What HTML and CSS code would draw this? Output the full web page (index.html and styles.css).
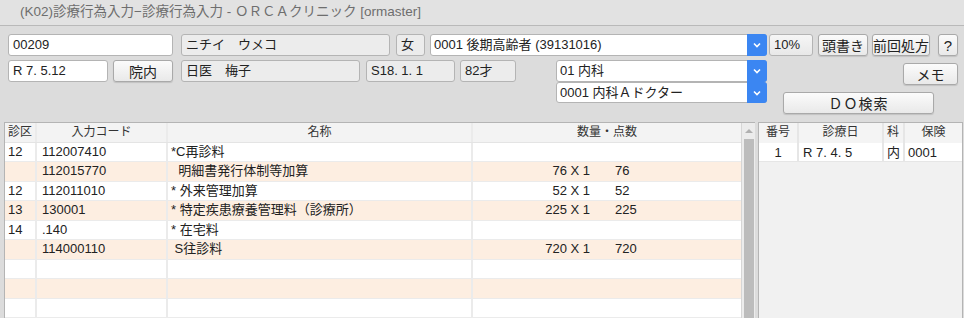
FILE: index.html
```html
<!DOCTYPE html>
<html lang="ja">

<head>
    <meta charset="UTF-8">
    <title>診療行為入力</title>
    <link rel="stylesheet" href="styles.css">
</head>

<body>
    <div class="titlebar">(K02)診療行為入力−診療行為入力 - ＯＲＣＡクリニック [ormaster]</div>

    <div class="top">
        <div class="row1">
            <div class="field w-id">00209</div>
            <div class="field ro w-kana">ニチイ　ウメコ</div>
            <div class="field ro w-sex">女</div>
            <div class="combo w-ins">
                <span class="combo-text">0001 後期高齢者 (39131016)</span>
                <span class="combo-btn"><svg width="8" height="6" viewBox="0 0 8 6"><polyline points="1,1.5 4,4.5 7,1.5" fill="none" stroke="#fff" stroke-width="1.6"/></svg></span>
            </div>
            <div class="field ro w-rate">10%</div>
            <button class="btn w-head">頭書き</button>
            <button class="btn w-prev">前回処方</button>
            <button class="btn w-help">?</button>
        </div>

        <div class="row2">
            <div class="field w-date">R 7. 5.12</div>
            <button class="btn w-inner">院内</button>
            <div class="field ro w-name">日医　梅子</div>
            <div class="field ro w-birth">S18. 1. 1</div>
            <div class="field ro w-age">82才</div>

            <div class="combo-col">
                <div class="combo">
                    <span class="combo-text">01 内科</span>
                    <span class="combo-btn"><svg width="8" height="6" viewBox="0 0 8 6"><polyline points="1,1.5 4,4.5 7,1.5" fill="none" stroke="#fff" stroke-width="1.6"/></svg></span>
                </div>
                <div class="combo">
                    <span class="combo-text">0001 内科Ａドクター</span>
                    <span class="combo-btn"><svg width="8" height="6" viewBox="0 0 8 6"><polyline points="1,1.5 4,4.5 7,1.5" fill="none" stroke="#fff" stroke-width="1.6"/></svg></span>
                </div>
            </div>

            <div class="btn-col">
                <button class="btn w-memo">メモ</button>
                <button class="btn w-do">ＤＯ検索</button>
            </div>
        </div>
    </div>

    <div class="main">
        <div class="order-table">
            <div class="order-body">
                <div class="trow thead">
                    <div class="c-kubun left">診区</div>
                    <div class="c-code center">入力コード</div>
                    <div class="c-name center">名称</div>
                    <div class="c-num center">数量・点数</div>
                </div>
                <div class="trow">
                    <div class="c-kubun">12</div>
                    <div class="c-code">112007410</div>
                    <div class="c-name">*C再診料</div>
                    <div class="c-num"></div>
                </div>
                <div class="trow alt">
                    <div class="c-kubun"></div>
                    <div class="c-code">112015770</div>
                    <div class="c-name">&nbsp;&nbsp;明細書発行体制等加算</div>
                    <div class="c-num"><span class="qty">76 X 1</span><span class="pts">76</span></div>
                </div>
                <div class="trow">
                    <div class="c-kubun">12</div>
                    <div class="c-code">112011010</div>
                    <div class="c-name">* 外来管理加算</div>
                    <div class="c-num"><span class="qty">52 X 1</span><span class="pts">52</span></div>
                </div>
                <div class="trow alt">
                    <div class="c-kubun">13</div>
                    <div class="c-code">130001</div>
                    <div class="c-name">* 特定疾患療養管理料（診療所）</div>
                    <div class="c-num"><span class="qty">225 X 1</span><span class="pts">225</span></div>
                </div>
                <div class="trow">
                    <div class="c-kubun">14</div>
                    <div class="c-code">.140</div>
                    <div class="c-name">* 在宅料</div>
                    <div class="c-num"></div>
                </div>
                <div class="trow alt">
                    <div class="c-kubun"></div>
                    <div class="c-code">114000110</div>
                    <div class="c-name">&nbsp;S往診料</div>
                    <div class="c-num"><span class="qty">720 X 1</span><span class="pts">720</span></div>
                </div>
                <div class="trow">
                    <div class="c-kubun"></div><div class="c-code"></div><div class="c-name"></div><div class="c-num"></div>
                </div>
                <div class="trow alt">
                    <div class="c-kubun"></div><div class="c-code"></div><div class="c-name"></div><div class="c-num"></div>
                </div>
                <div class="trow">
                    <div class="c-kubun"></div><div class="c-code"></div><div class="c-name"></div><div class="c-num"></div>
                </div>
            </div>
            <div class="scrollbar">
                <div class="scroll-up"></div>
                <div class="scroll-thumb"></div>
            </div>
        </div>

        <div class="history">
            <div class="hrow hhead">
                <div class="h-no">番号</div>
                <div class="h-date center">診療日</div>
                <div class="h-ka">科</div>
                <div class="h-ins center">保険</div>
            </div>
            <div class="hrow hdata">
                <div class="h-no">1</div>
                <div class="h-date">R 7. 4. 5</div>
                <div class="h-ka">内</div>
                <div class="h-ins">0001</div>
            </div>
        </div>
    </div>
</body>

</html>
```

FILE: styles.css
```css
body {
    margin: 0;
    background-color: #dcdcdc;
    color: #222222;
    font-family: "Liberation Sans", "Noto Sans CJK JP", sans-serif;
    font-size: 13px;
    height: 318px;
    overflow: hidden;
}

.titlebar {
    height: 25px;
    line-height: 24px;
    padding-left: 20px;
    font-size: 13.5px;
    color: #6e6e6e;
    background-color: #e2e2e2;
    border-bottom: 1px solid #b9b9b9;
}

.top {
    padding: 0 6px 0 8px;
}

.row1 {
    display: flex;
    margin-top: 8px;
    height: 22px;
}

.row2 {
    display: flex;
    align-items: flex-start;
    margin-top: 4px;
}

.field {
    box-sizing: border-box;
    height: 22px;
    line-height: 20px;
    padding: 0 4px;
    background-color: #ffffff;
    border: 1px solid #b4b4b4;
    border-radius: 3px;
    white-space: nowrap;
}

.field.ro {
    background-color: #ececec;
}

.btn {
    box-sizing: border-box;
    height: 22px;
    padding: 0;
    font-family: inherit;
    font-size: 14px;
    color: #222222;
    background: linear-gradient(#fbfbfb, #e9e9e9);
    border: 1px solid #a9a9a9;
    border-radius: 3px;
    box-shadow: 0 1px 1px rgba(0, 0, 0, 0.12);
    white-space: nowrap;
}

.w-id { width: 165px; }
.w-kana { width: 209px; margin-left: 8px; }
.w-sex { width: 29px; margin-left: 6px; }
.w-ins { width: 337px; margin-left: 5px; }
.w-rate { width: 44px; margin-left: 2px; background: linear-gradient(#f6f6f6, #e8e8e8) !important; }
.w-head { width: 50px; margin-left: 5px; }
.w-prev { width: 58px; margin-left: 4px; }
.w-help { width: 20px; margin-left: 8px; font-size: 15px; }

.w-date { width: 100px; }
.w-inner { width: 60px; margin-left: 5px; }
.w-name { width: 179px; margin-left: 8px; }
.w-birth { width: 89px; margin-left: 6px; }
.w-age { width: 56px; margin-left: 5px; }

.combo {
    box-sizing: border-box;
    display: flex;
    height: 22px;
    background-color: #ffffff;
    border: 1px solid #b4b4b4;
    border-radius: 3px;
}

.combo-text {
    flex: 1;
    line-height: 20px;
    padding-left: 3px;
    white-space: nowrap;
}

.combo-btn {
    width: 20px;
    margin: -1px -1px -1px 0;
    display: flex;
    align-items: center;
    justify-content: center;
    background-color: #3b86f2;
    border-radius: 0 3px 3px 0;
}

.combo-col {
    width: 211px;
    margin-left: 40px;
}

.combo-col .combo + .combo {
    height: 21px;
}

.btn-col {
    width: 175px;
    margin-left: 16px;
    display: flex;
    flex-direction: column;
    align-items: flex-end;
}

.w-memo {
    width: 55px;
    margin-top: 3px;
}

.w-do {
    width: 151px;
    margin-top: 7px;
    align-self: flex-start;
    letter-spacing: 1px;
}

.main {
    display: flex;
    margin-top: 8px;
    padding-left: 4px;
}

.order-table {
    display: flex;
    width: 751px;
    height: 200px;
    box-sizing: border-box;
    background-color: #ffffff;
    border: 1px solid #b4b4b4;
    border-right: none;
}

.order-body {
    flex: 1;
}

.trow {
    display: flex;
    height: 19.5px;
    box-sizing: border-box;
    border-bottom: 1px solid #ebebeb;
    line-height: 18px;
    white-space: nowrap;
}

.trow.alt {
    background-color: #fdeee1;
}

.trow.thead {
    background-color: #f3f3f3;
    border-bottom: 1px solid #e4e4e4;
    font-size: 12px;
    color: #333333;
}

.trow > div {
    box-sizing: border-box;
    border-right: 2px solid #ebebeb;
    padding-left: 3px;
}

.c-kubun { width: 32px; }
.c-code { width: 131px; padding-left: 5px !important; }
.c-name { width: 305px; }
.c-num { flex: 1; border-right: none !important; display: flex; }

.center { text-align: center; justify-content: center; padding-left: 0 !important; }
.left { padding-left: 3px; }

.qty {
    width: 114px;
    text-align: right;
}

.pts {
    margin-left: 25px;
}

.scrollbar {
    width: 13px;
    background-color: #ececec;
    border-left: 1px solid #d6d6d6;
    display: flex;
    flex-direction: column;
    align-items: center;
}

.scroll-up {
    margin-top: 6px;
    width: 0;
    height: 0;
    border-left: 4px solid transparent;
    border-right: 4px solid transparent;
    border-bottom: 4px solid #b0b0b0;
}

.scroll-thumb {
    margin-top: 6px;
    width: 10px;
    flex: 1;
    background-color: #bcbcbc;
}

.history {
    width: 205px;
    height: 200px;
    margin-left: 3px;
    box-sizing: border-box;
    background-color: #f1f1f1;
    border: 1px solid #b4b4b4;
}

.hrow {
    display: flex;
    height: 19.5px;
    line-height: 19px;
    box-sizing: border-box;
    white-space: nowrap;
}

.hhead {
    background-color: #f4f4f4;
    font-size: 12px;
    color: #333333;
}

.hdata {
    background-color: #ffffff;
    border-bottom: 1px solid #e6e6e6;
}

.hrow > div {
    box-sizing: border-box;
    border-right: 2px solid #e6e6e6;
}

.h-no { width: 40px; text-align: center; }
.h-date { width: 85px; padding-left: 4px; }
.h-ka { width: 21px; padding-left: 3px; }
.h-ins { flex: 1; padding-left: 3px; border-right: none !important; }
```
